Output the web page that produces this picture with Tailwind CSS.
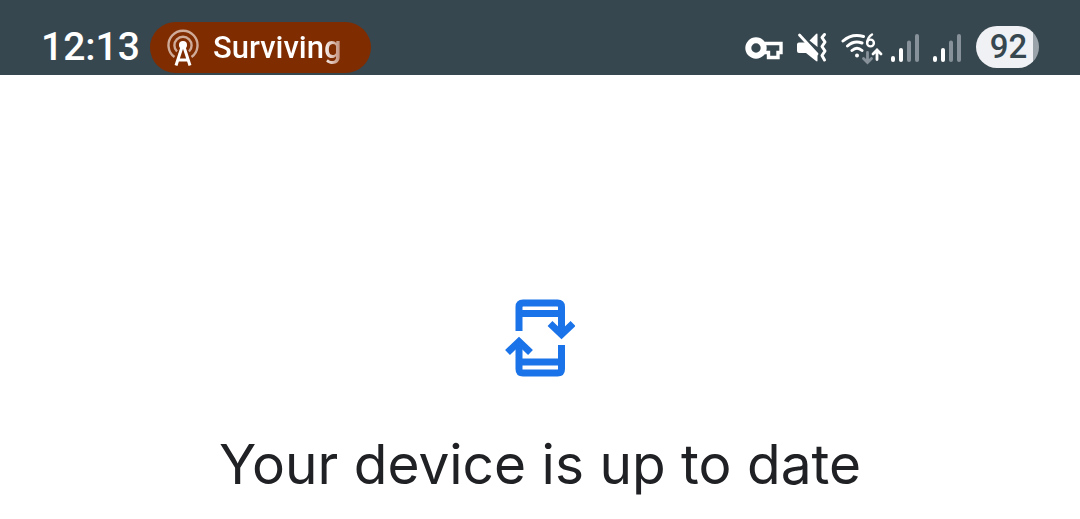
<!DOCTYPE html>
<html lang="en">
<head>
    <meta charset="UTF-8">
    <meta name="viewport" content="width=device-width, initial-scale=1.0">
    <title>System update</title>
    <script src="https://cdn.jsdelivr.net/npm/@tailwindcss/browser@4"></script>
</head>
<body class="min-h-screen bg-white font-['Roboto',sans-serif]">
    <!-- Status bar -->
    <header class="flex items-center bg-[#37474f] pt-[22px] pr-[41px] pb-[2px] pl-[41px] text-white">
        <time class="pb-[2px] text-[39px] leading-[48px] font-medium">12:13</time>

        <button class="ml-[10px] flex h-[51px] w-[221px] items-center rounded-full bg-[#7f2c00] pl-[17px]">
            <svg class="h-[38px] w-[32px] shrink-0" viewBox="0 0 32 38" fill="none" stroke="#fff" aria-hidden="true">
                <path d="M7.500 28A14.500 14.500 0 1 1 24.500 28" stroke="#cfab99" stroke-width="2.400"/>
                <path d="M10 22.500A8.600 8.600 0 1 1 22 22.500" stroke="#cfab99" stroke-width="2.400"/>
                <circle cx="16" cy="16" r="4" fill="#fff" stroke="none"/>
                <path d="M15 18L9 36.500M17 18L23 36.500M11.500 31h9" stroke-width="3"/>
            </svg>
            <span class="ml-[14px] bg-linear-to-r from-white from-85% to-[#b98570] bg-clip-text pt-px text-[31px] leading-[40px] font-medium text-transparent">Surviving</span>
        </button>

        <!-- System icons -->
        <div class="mb-px ml-auto flex items-center">
            <svg class="mr-[14px] h-[37px] w-[38px]" viewBox="0 0 38 37" fill="none" stroke="#fff" role="img" aria-label="VPN">
                <circle cx="11" cy="19" r="7.700" stroke-width="6"/>
                <path d="M18 14.500h18v9h-3v5h-9.500v-5h-7" stroke-width="3.400"/>
            </svg>
            <svg class="mr-[14px] h-[37px] w-[30px]" viewBox="0 0 30 37" fill="#fff" role="img" aria-label="Vibrate">
                <path d="M2 13.500h7L20.500 25v6.500q0 1.500-1.500.5L9 24H2q-2 0-2-2v-6.500q0-2 2-2zM12.500 11.500l6.500-6.500q1.500-1 1.500.5V18z"/>
                <path d="M2.500 6L20 25" stroke="#fff" stroke-width="2.800" stroke-linecap="round"/>
                <path d="M27.500 5.500L25 8.500l3 4.500-3 4.500 3 4.500-3 4.500 2.500 4.500" fill="none" stroke="#fff" stroke-width="3" stroke-linecap="round" stroke-linejoin="round"/>
            </svg>
            <svg class="mr-2 h-[37px] w-[42px]" viewBox="0 0 42 37" fill="none" stroke="#fff" stroke-width="3" stroke-linecap="round" role="img" aria-label="Wi-Fi 6">
                <path d="M2 12Q11 4 22.500 7.500M6.500 17Q13 11 21 14M11 21.500q5-4.500 10 0"/>
                <circle cx="16" cy="26.500" r="2" fill="#fff" stroke="none"/>
                <circle cx="29.500" cy="14" r="3.400" stroke-width="2.400"/>
                <path d="M26.200 13Q27 8 31 5.500" stroke-width="2.400"/>
                <path d="M26.500 23.500v10M22.500 29.500l4 4 4-4" stroke="#87919a" stroke-width="2.800"/>
                <path d="M36 30.500V21M32 25l4-4 4 4" stroke-width="2.800"/>
            </svg>
            <svg class="mr-[14px] h-[37px] w-[28px]" viewBox="0 0 28 37" fill="none" stroke="#fff" stroke-width="4" stroke-linecap="round" role="img" aria-label="SIM 1 signal">
                <path d="M2 29v2M10 21v10"/>
                <path d="M18 13.500v17.500M26 7v24" stroke="#87919a"/>
            </svg>
            <svg class="mr-[15px] h-[37px] w-[28px]" viewBox="0 0 28 37" fill="none" stroke="#fff" stroke-width="4" stroke-linecap="round" role="img" aria-label="SIM 2 signal">
                <path d="M2 29v2M10 21v10"/>
                <path d="M18 13.500v17.500M26 7v24" stroke="#87919a"/>
            </svg>
            <div class="flex h-[42px] w-[63px] items-center justify-center rounded-full bg-linear-to-r from-[#eff1f4] from-90% to-[#9aa3a9] to-90% pl-[2px] text-[33px] leading-[42px] font-medium text-[#37474f]">92</div>
        </div>
    </header>

    <!-- Update status -->
    <main class="flex flex-col items-center px-6 pt-[223px]">
        <svg class="h-[80px] w-[70px]" viewBox="0 0 70 80" fill="none" stroke="#1a73e8" stroke-width="7" aria-hidden="true">
            <path d="M14 33V9q0-4 4-4h34.500q4 0 4 4v28M56.500 47v24q0 4-4 4H18q-4 0-4-4V46"/>
            <path d="M14 15.500h42M14 64h42"/>
            <path d="M45 25.500l11.500 11 11.500-11M2.500 54.500l11.500-11 11.500 11"/>
            <path d="M51 29h11l-5.500 8zM8.500 51h11L14 43z" fill="#1a73e8" stroke="none"/>
        </svg>
        <h1 class="mt-[50px] text-center font-['Inter',sans-serif] text-[55px] leading-[72px] text-[#202124]">Your device is up to date</h1>
    </main>
</body>
</html>
